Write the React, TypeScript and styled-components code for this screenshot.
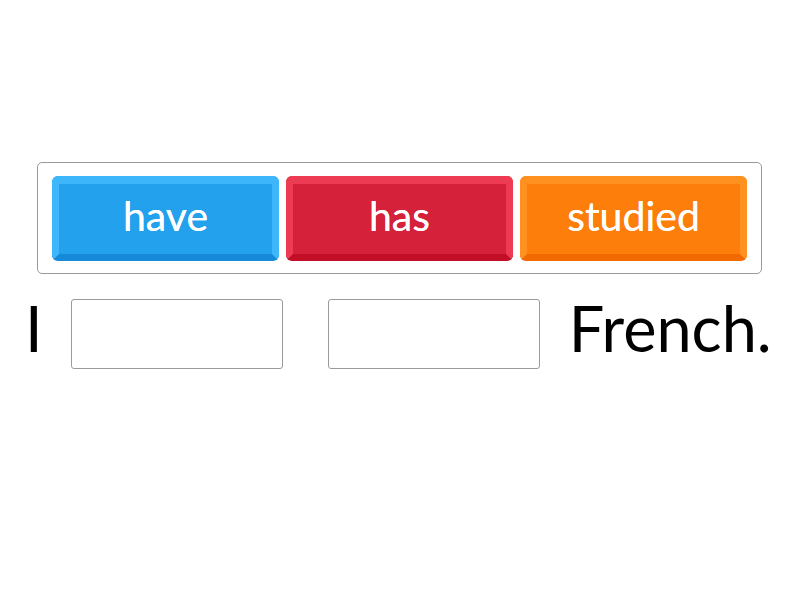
import styled, { createGlobalStyle } from 'styled-components';

const GlobalStyle = createGlobalStyle`
  html, body {
    margin: 0;
    padding: 0;
    background: #ffffff;
  }
  body {
    font-family: Lato, "Open Sans", sans-serif;
  }
`;

type TileColors = {
  readonly base: string;
  readonly light: string;
  readonly dark: string;
};

const Page = styled.div`
  width: 800px;
  height: 600px;
  padding-top: 162px;
  box-sizing: border-box;
`;

const Bank = styled.div`
  margin-left: 37px;
  width: 725px;
  height: 112px;
  box-sizing: border-box;
  border: 1px solid #9a9a9a;
  border-radius: 5px;
  padding: 13px 14px;
  display: flex;
  gap: 7px;
`;

const Tile = styled.div<TileColors>`
  width: 227px;
  height: 85px;
  box-sizing: border-box;
  border-radius: 6px;
  border: 7px solid;
  border-top-width: 8px;
  border-color: ${({ light }) => light} ${({ light }) => light} ${({ dark }) => dark} ${({ light }) => light};
  background: ${({ base }) => base};
  color: #ffffff;
  font-size: 41px;
  text-shadow: 0 0 0.6px #ffffff;
  display: flex;
  align-items: center;
  justify-content: center;
  padding-bottom: 8px;
`;

const Sentence = styled.div`
  display: flex;
  align-items: center;
  margin-top: 25px;
  padding-left: 25px;
  font-size: 63px;
  color: #000000;
  height: 70px;
`;

const Word = styled.span<{ readonly gap: number }>`
  margin-right: ${({ gap }) => gap}px;
  line-height: 1;
  padding-bottom: 14px;
`;

const Slot = styled.div<{ readonly gap: number }>`
  width: 212px;
  height: 70px;
  box-sizing: border-box;
  border: 1px solid #9a9a9a;
  border-radius: 3px;
  margin-right: ${({ gap }) => gap}px;
`;

const tiles = [
  { word: 'have', base: '#24a1ed', light: '#3db6fb', dark: '#168ad8' },
  { word: 'has', base: '#d5213a', light: '#ec3b52', dark: '#c20f27' },
  { word: 'studied', base: '#fe7e0c', light: '#ff9120', dark: '#f16a00' },
];

const App = () => (
  <Page>
    <GlobalStyle />
    <Bank>
      {tiles.map((t) => (
        <Tile key={t.word} base={t.base} light={t.light} dark={t.dark}>
          {t.word}
        </Tile>
      ))}
    </Bank>
    <Sentence>
      <Word gap={28}>I</Word>
      <Slot gap={45} />
      <Slot gap={29} />
      <Word gap={0}>French.</Word>
    </Sentence>
  </Page>
);

export default App;
